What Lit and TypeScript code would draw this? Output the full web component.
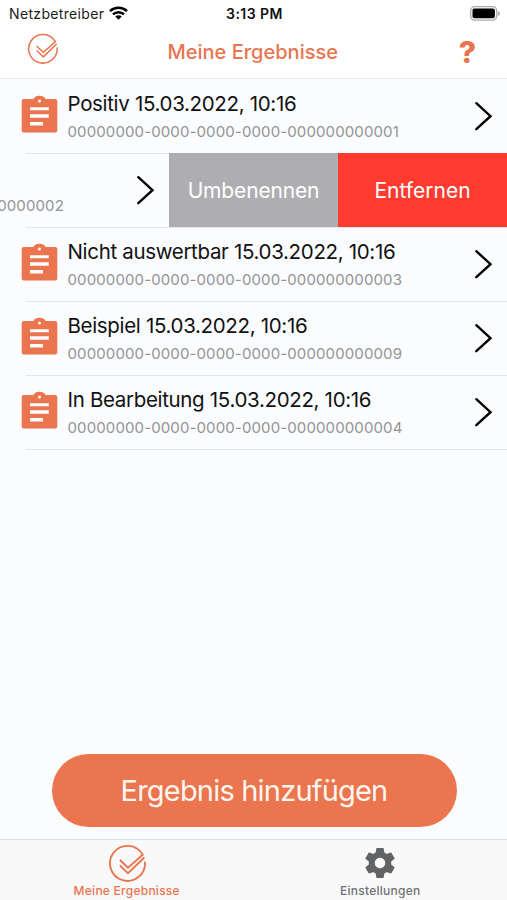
import { LitElement, html, svg, css, nothing } from "lit";
import { customElement, property } from "lit/decorators.js";

interface Result {
  title: string;
  id: string;
  swiped?: boolean;
}

const RESULTS: Result[] = [
  { title: "Positiv 15.03.2022, 10:16", id: "00000000-0000-0000-0000-000000000001" },
  { title: "", id: "00000000-0000-0000-0000-000000000002", swiped: true },
  { title: "Nicht auswertbar 15.03.2022, 10:16", id: "00000000-0000-0000-0000-000000000003" },
  { title: "Beispiel 15.03.2022, 10:16", id: "00000000-0000-0000-0000-000000000009" },
  { title: "In Bearbeitung 15.03.2022, 10:16", id: "00000000-0000-0000-0000-000000000004" },
];

const checkLogo = (size: number) => html`
  <svg width=${size} height=${size} viewBox="0 0 38 38" fill="none" stroke="#e97550" stroke-width="1.9">
    ${svg`<path d="M12.7 15.6v1.2l7.3 6.800L34.700 10.700A17.500 17.500 0 1 0 36.900 17.600"/>
    <path d="M12.700 21v1.400l7.300 6.900L36.300 13.500"/>`}
  </svg>`;

@customElement("result-row")
export class ResultRow extends LitElement {
  @property({ attribute: false }) result!: Result;

  static styles = css`
    :host { display: flex; height: 74px; position: relative; }
    .content { flex: none; width: 507px; height: 74px; display: flex; box-sizing: border-box; padding-left: 21px; }
    .swiped { margin-left: -338px; }
    .clip { flex: none; margin-top: 16px; width: 37px; height: 38px; }
    .text { flex: 1; margin-left: 9.5px; padding-top: 12px; white-space: nowrap; }
    .title { font-size: 20.5px; line-height: 26px; height: 26px; color: #111; letter-spacing: -0.33px; }
    .id { font-size: 15px; line-height: 20px; margin-top: 5px; color: #949496; letter-spacing: 0.12px; }
    .chev { flex: none; margin: 21px 14px 0 0; }
    .action { flex: none; width: 169px; height: 74px; line-height: 76px; text-align: center; color: #fff; font-size: 21px; z-index: 1; }
    .rename { background: #aeaeb2; letter-spacing: -0.15px; }
    .remove { background: #ff3b30; }
    .line { position: absolute; left: 26px; right: 0; bottom: -1px; height: 1px; background: #e4e5e8; }
  `;

  render() {
    const r = this.result;
    return html`
      <div class="content ${r.swiped ? "swiped" : ""}">
        <svg class="clip" viewBox="0 0 37 38">
          <path fill="#ea754e" d="M3 4h9.500C13.500 2 15.500 .8 18.500 .8S23.500 2 24.500 4H34a2.200 2.200 0 0 1 2.300 2.200V35.300a2.200 2.200 0 0 1-2.300 2.200H3A2.200 2.200 0 0 1 .7 35.300V6.200A2.200 2.200 0 0 1 3 4z"/>
          <circle cx="18.500" cy="6" r="1.500" fill="#fbfcfe"/>
          <path fill="#fbfcfe" d="M9 12.200h18.800v3H9zM9 19.200h18.800v3.500H9zM9 27h13v3.400H9z"/>
        </svg>
        <div class="text">
          <div class="title">${r.title}</div>
          <div class="id">${r.id}</div>
        </div>
        <svg class="chev" width="20" height="32" viewBox="0 0 20 32" fill="none" stroke="#000" stroke-width="2.400" stroke-linecap="round">
          <path d="M3.300 3.200L17.500 16.200L3.300 29.200"/>
        </svg>
      </div>
      ${r.swiped
        ? html`<div class="action rename">Umbenennen</div><div class="action remove">Entfernen</div>`
        : nothing}
      <div class="line"></div>
    `;
  }
}

@customElement("app-root")
export class AppRoot extends LitElement {
  static styles = css`
    :host { display: flex; flex-direction: column; width: 507px; height: 900px; overflow: hidden; background: #fafcfe; font-family: Inter, "Liberation Sans", sans-serif; }
    svg { display: block; }
    .status { height: 26px; background: #fff; display: grid; grid-template-columns: 1fr auto 1fr; align-items: center; padding: 0 7px 0 9px; font-size: 14px; color: #1b1b1b; }
    .carrier { display: flex; align-items: center; gap: 5px; letter-spacing: 0.34px; }
    .time { font-weight: 600; font-size: 14px; color: #111; letter-spacing: 0.45px; }
    .battery { justify-self: end; }
    .nav { height: 53px; box-sizing: border-box; background: #fff; display: grid; grid-template-columns: 1fr auto 1fr; padding: 0 31px 0 27px; border-bottom: 1px solid #e8e9eb; color: #e97550; }
    .logo { padding-top: 7px; }
    .heading { font-size: 20px; font-weight: 500; line-height: 24px; padding: 14px 0 0 2.500px; }
    .help { font-size: 30px; font-weight: 800; line-height: 30px; padding-top: 11px; justify-self: end; }
    .list { flex: 1; }
    .add { align-self: center; width: 405px; height: 73px; border-radius: 37px; background: #ea754e; color: #fff6f0; font-size: 29px; letter-spacing: -0.8px; line-height: 73px; text-align: center; margin: 0 0 12px 1px; }
    .tabs { height: 61px; box-sizing: border-box; background: #f9f9fa; border-top: 1px solid #dcdee0; display: grid; grid-template-columns: 1fr 1fr; }
    .tab { display: flex; flex-direction: column; align-items: center; font-size: 12px; font-weight: 500; line-height: 18px; color: #727274; letter-spacing: 0.25px; }
    .icon { height: 38px; margin-top: 4px; display: flex; align-items: center; }
    .active { color: #e97550; }
  `;

  render() {
    return html`
      <div class="status">
        <div class="carrier">
          <span>Netzbetreiber</span>
          <svg width="19" height="14" viewBox="0 0 19 14" fill="none" stroke="#000" stroke-width="2.500">
            <path d="M1 5.200A12.300 12.300 0 0 1 18 5.200M4 8.400a8 8 0 0 1 11 0"/>
            <path fill="#000" stroke="none" d="M9.500 13.800L6.300 10.600a4.600 4.600 0 0 1 6.400 0z"/>
          </svg>
        </div>
        <div class="time">3:13 PM</div>
        <svg class="battery" width="30" height="15" viewBox="0 0 30 15">
          <rect x=".7" y=".7" width="26" height="13.400" rx="4" fill="#fff" stroke="#aaa" stroke-width="1.300"/>
          <rect x="2.500" y="2.500" width="22.400" height="9.800" rx="2" fill="#000"/>
          <path d="M28 5v5q2-1 2-2.500T28 5z" fill="#aaa"/>
        </svg>
      </div>
      <div class="nav">
        <div class="logo">${checkLogo(31)}</div>
        <div class="heading">Meine Ergebnisse</div>
        <div class="help">?</div>
      </div>
      <div class="list">
        ${RESULTS.map((r) => html`<result-row .result=${r}></result-row>`)}
      </div>
      <div class="add">Ergebnis hinzufügen</div>
      <div class="tabs">
        <div class="tab active">
          <div class="icon">${checkLogo(38)}</div>
          Meine Ergebnisse
        </div>
        <div class="tab">
          <div class="icon">
            <svg width="36" height="36" viewBox="0 0 24 24" fill="#626366">
              <path d="M19.430 12.980c.04-.32.07-.64.07-.98s-.03-.66-.07-.98l2.110-1.650c.19-.15.24-.42.12-.64l-2-3.460c-.12-.22-.39-.3-.61-.22l-2.490 1c-.52-.4-1.080-.73-1.690-.98l-.38-2.650C14.460 2.180 14.250 2 14 2h-4c-.25 0-.46.18-.49.42l-.38 2.650c-.61.25-1.170.59-1.690.98l-2.490-1c-.23-.09-.49 0-.61.22l-2 3.460c-.13.22-.07.49.12.64l2.110 1.650c-.04.32-.07.65-.07.98s.03.66.07.98l-2.110 1.650c-.19.15-.24.42-.12.64l2 3.460c.12.22.39.3.61.22l2.490-1c.52.4 1.080.73 1.690.98l.38 2.650c.03.24.24.42.49.42h4c.25 0 .46-.18.49-.42l.38-2.650c.61-.25 1.170-.59 1.690-.98l2.490 1c.23.09.49 0 .61-.22l2-3.460c.12-.22.07-.49-.12-.64l-2.110-1.650zM12 15.500c-1.930 0-3.500-1.570-3.500-3.500s1.570-3.500 3.500-3.500 3.500 1.570 3.500 3.500-1.570 3.500-3.500 3.500z"/>
            </svg>
          </div>
          Einstellungen
        </div>
      </div>
    `;
  }
}
